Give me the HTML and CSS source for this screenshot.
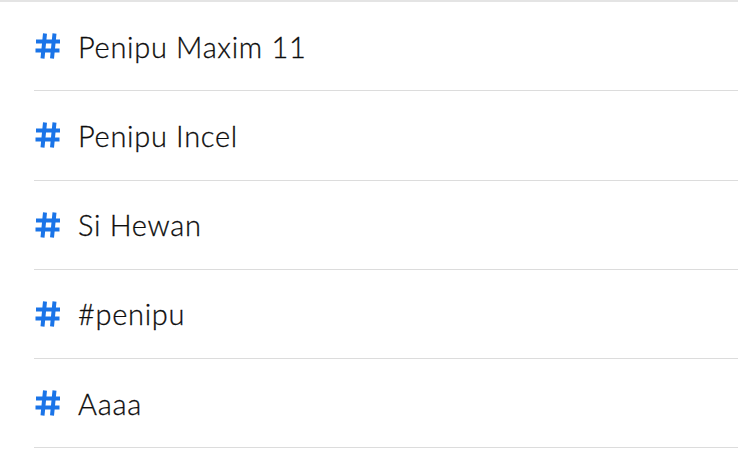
FILE: index.html
```html
<!DOCTYPE html>
<html lang="id">
<head>
    <meta charset="UTF-8">
    <meta name="viewport" content="width=device-width, initial-scale=1.0">
    <title>Tag</title>
    <link rel="stylesheet" href="styles.css">
</head>
<body>

    <!-- Daftar tag -->
    <ul class="tag-list">
        <li class="tag-item">
            <svg class="tag-icon" viewBox="0 0 26 28"><path d="M10 1.5 L7.5 26.5 M19.5 1.5 L17 26.5 M1 9.5 H25 M0.5 18.5 H24.5" /></svg>
            <span class="tag-name">Penipu Maxim 11</span>
        </li>
        <li class="tag-item">
            <svg class="tag-icon" viewBox="0 0 26 28"><path d="M10 1.5 L7.5 26.5 M19.5 1.5 L17 26.5 M1 9.5 H25 M0.5 18.5 H24.5" /></svg>
            <span class="tag-name">Penipu Incel</span>
        </li>
        <li class="tag-item">
            <svg class="tag-icon" viewBox="0 0 26 28"><path d="M10 1.5 L7.5 26.5 M19.5 1.5 L17 26.5 M1 9.5 H25 M0.5 18.5 H24.5" /></svg>
            <span class="tag-name">Si Hewan</span>
        </li>
        <li class="tag-item">
            <svg class="tag-icon" viewBox="0 0 26 28"><path d="M10 1.5 L7.5 26.5 M19.5 1.5 L17 26.5 M1 9.5 H25 M0.5 18.5 H24.5" /></svg>
            <span class="tag-name">#penipu</span>
        </li>
        <li class="tag-item">
            <svg class="tag-icon" viewBox="0 0 26 28"><path d="M10 1.5 L7.5 26.5 M19.5 1.5 L17 26.5 M1 9.5 H25 M0.5 18.5 H24.5" /></svg>
            <span class="tag-name">Aaaa</span>
        </li>
    </ul>

</body>
</html>
```

FILE: styles.css
```css
/* General Styling */
* {
    margin: 0;
    padding: 0;
    box-sizing: border-box;
}

body {
    font-family: Lato, "Noto Sans", sans-serif;
    background-color: #fff;
    color: #0d0d0d;
}

/* Tag List */
.tag-list {
    list-style: none;
    border-top: 2px solid #e4e4e4;
}

.tag-item {
    display: flex;
    align-items: center;
    height: 89.25px;
    margin-left: 34px;
    border-bottom: 1px solid #dcdcdc;
}

.tag-icon {
    width: 26px;
    height: 28px;
    margin-left: 1px;
    margin-right: 17px;
    fill: none;
    stroke: #1a74e8;
    stroke-width: 4;
}

.tag-name {
    font-size: 29px;
    font-weight: 300;
    letter-spacing: 0.7px;
    -webkit-text-stroke: 0.3px #0d0d0d;
}
```
